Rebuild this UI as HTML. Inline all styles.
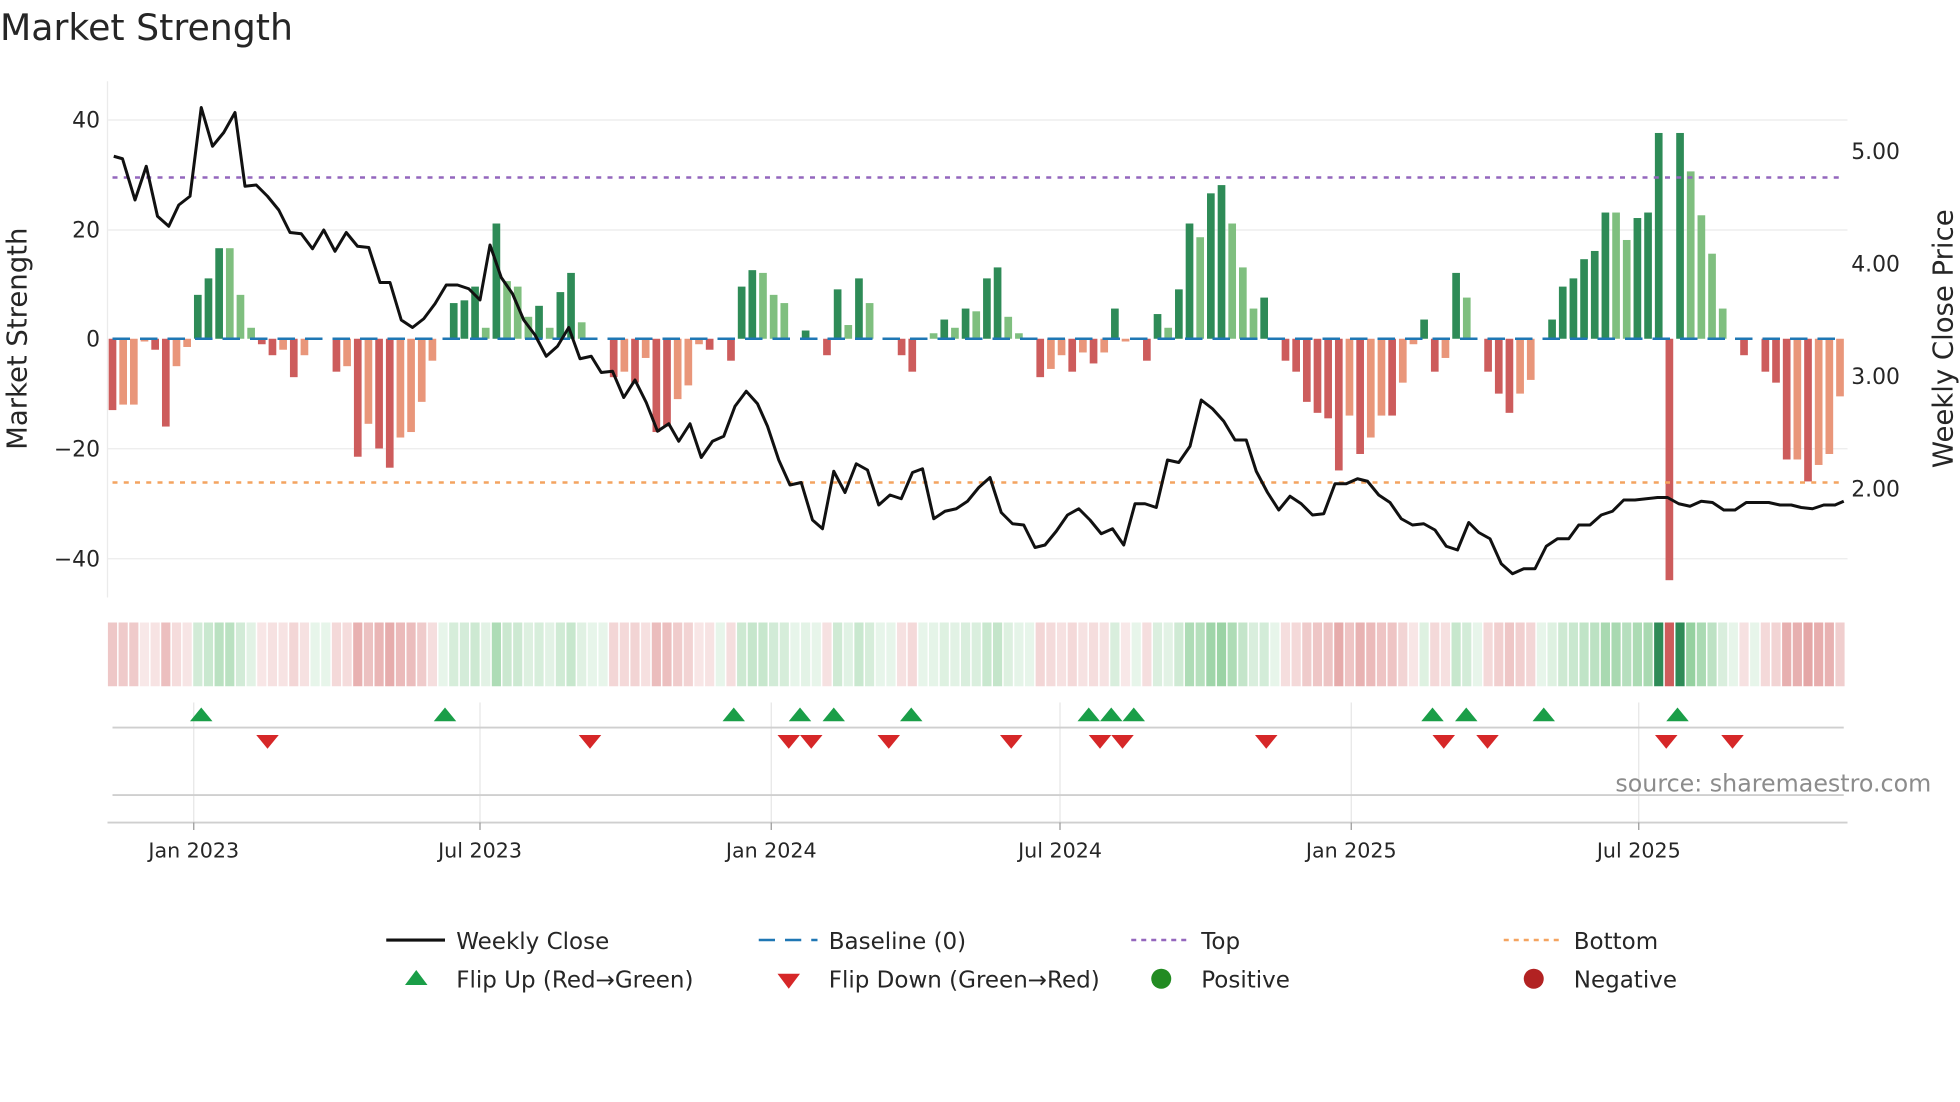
<!DOCTYPE html>
<html><head><meta charset="utf-8">
<style>
html,body{margin:0;padding:0;background:#fff;width:1960px;height:1102px;overflow:hidden}
svg{display:block}
text{font-family:"DejaVu Sans","Liberation Sans",sans-serif;fill:#262626}
</style></head>
<body>
<svg id="s" width="1960" height="1102" viewBox="0 0 1568 881.6" xmlns="http://www.w3.org/2000/svg">
<text x="0" y="32" font-size="29">Market Strength</text>
<g id="grid" stroke="#ebebeb" stroke-width="1">
<line x1="86" y1="96" x2="1478" y2="96"/>
<line x1="86" y1="184" x2="1478" y2="184"/>
<line x1="86" y1="359" x2="1478" y2="359"/>
<line x1="86" y1="447" x2="1478" y2="447"/>
<line x1="86" y1="65" x2="86" y2="478"/>
</g>
<g font-size="17.5" text-anchor="end">
<text x="80" y="102">40</text><text x="80" y="190">20</text><text x="80" y="277">0</text>
<text x="80" y="365">−20</text><text x="80" y="453">−40</text>
</g>
<g font-size="17.5">
<text x="1481" y="127">5.00</text><text x="1481" y="217">4.00</text>
<text x="1481" y="307">3.00</text><text x="1481" y="397">2.00</text>
</g>
<text transform="translate(21,271) rotate(-90)" font-size="22" text-anchor="middle">Market Strength</text>
<text transform="translate(1562,271) rotate(-90)" font-size="22" text-anchor="middle">Weekly Close Price</text>
<g id="bars"></g>
<line x1="90" y1="271" x2="1475" y2="271" stroke="#1f77b4" stroke-width="2" stroke-dasharray="14,8"/>
<line x1="90" y1="142" x2="1475" y2="142" stroke="#9467bd" stroke-width="2" stroke-dasharray="4,5"/>
<line x1="90" y1="386" x2="1475" y2="386" stroke="#f4a460" stroke-width="2" stroke-dasharray="4,5"/>
<polyline id="pl" fill="none" stroke="#111" stroke-width="2.4" stroke-linejoin="round"/>
<g id="heat"></g>
<g stroke="#e6e6e6" stroke-width="1">
<line x1="155" y1="562" x2="155" y2="658"/><line x1="384" y1="562" x2="384" y2="658"/>
<line x1="617" y1="562" x2="617" y2="658"/><line x1="848" y1="562" x2="848" y2="658"/>
<line x1="1081" y1="562" x2="1081" y2="658"/><line x1="1311" y1="562" x2="1311" y2="658"/>
</g>
<line x1="90" y1="582" x2="1475" y2="582" stroke="#cfcfcf" stroke-width="1.5"/>
<line x1="90" y1="636" x2="1475" y2="636" stroke="#cfcfcf" stroke-width="1.5"/>
<line x1="86" y1="658" x2="1478" y2="658" stroke="#cfcfcf" stroke-width="1.5"/>
<g id="mk"></g>
<g stroke="#999" stroke-width="1"><line x1="155" y1="658" x2="155" y2="664"/><line x1="384" y1="658" x2="384" y2="664"/><line x1="617" y1="658" x2="617" y2="664"/><line x1="848" y1="658" x2="848" y2="664"/><line x1="1081" y1="658" x2="1081" y2="664"/><line x1="1311" y1="658" x2="1311" y2="664"/></g>
<g font-size="16.5" text-anchor="middle">
<text x="155" y="686">Jan 2023</text><text x="384" y="686">Jul 2023</text><text x="617" y="686">Jan 2024</text>
<text x="848" y="686">Jul 2024</text><text x="1081" y="686">Jan 2025</text><text x="1311" y="686">Jul 2025</text>
</g>
<text x="1545" y="633" font-size="19" text-anchor="end" style="fill:#8c8c8c">source: sharemaestro.com</text>
<g font-size="18.4">
<line x1="309" y1="752" x2="356" y2="752" stroke="#111" stroke-width="2.5"/>
<text x="365" y="759">Weekly Close</text>
<line x1="607" y1="752" x2="654" y2="752" stroke="#1f77b4" stroke-width="2" stroke-dasharray="13,8"/>
<text x="663" y="759">Baseline (0)</text>
<line x1="905" y1="752" x2="952" y2="752" stroke="#9467bd" stroke-width="2" stroke-dasharray="4,4"/>
<text x="961" y="759">Top</text>
<line x1="1203" y1="752" x2="1250" y2="752" stroke="#f4a460" stroke-width="2" stroke-dasharray="4,4"/>
<text x="1259" y="759">Bottom</text>
<polygon points="324,788 342,788 333,776" fill="#1a9e48"/>
<text x="365" y="790">Flip Up (Red→Green)</text>
<polygon points="622,779 640,779 631,791" fill="#d62728"/>
<text x="663" y="790">Flip Down (Green→Red)</text>
<circle cx="929" cy="783" r="8" fill="#228b22"/>
<text x="961" y="790">Positive</text>
<circle cx="1227" cy="783" r="8" fill="#b22222"/>
<text x="1259" y="790">Negative</text>
</g>
</svg>
<script>
var v=[[-13,1],[-12,0],[-12,0],[-0.5,0],[-2,1],[-16,1],[-5,0],[-1.5,0],[8,1],[11,1],[16.5,1],[16.5,0],[8,0],[2,0],[-1,1],[-3,1],[-2,0],[-7,1],[-3,0],[0,0],[0,0],[-6,1],[-5,0],[-21.5,1],[-15.5,0],[-20,1],[-23.5,1],[-18,0],[-17,0],[-11.5,0],[-4,0],[0,0],
[6.5,1],[7,1],[9.5,1],[2,0],[21,1],[10.5,0],[9.5,0],[4,0],[6,1],[2,0],[8.5,1],[12,1],[3,0],[0,0],[0,0],[-7,1],[-6,0],[-8,1],[-3.5,0],[-17,1],[-16,1],[-11,0],[-8.5,0],[-1,0],[-2,1],[0,0],[-4,1],
[9.5,1],[12.5,1],[12,0],[8,0],[6.5,0],[0,0],[1.5,1],[0,0],[-3,1],[9,1],[2.5,0],[11,1],[6.5,0],[0,0],[0,0],[-3,1],[-6,1],[0,0],[1,0],[3.5,1],[2,0],[5.5,1],[5,0],[11,1],[13,1],[4,0],[1,0],[0,0],[-7,1],[-5.5,0],[-3,0],[-6,1],[-2.5,0],[-4.5,1],[-2.5,0],[5.5,1],[-0.5,0],[0,0],[-4,1],[4.5,1],[2,0],[9,1],[21,1],[18.5,0],[26.5,1],[28,1],[21,0],[13,0],[5.5,0],[7.5,1],[0,0],
[-4,1],[-6,1],[-11.5,1],[-13.5,1],[-14.5,1],[-24,1],[-14,0],[-21,1],[-18,0],[-14,0],[-14,1],[-8,0],[-1,0],[3.5,1],[-6,1],[-3.5,0],[12,1],[7.5,0],[0,0],[-6,1],[-10,1],[-13.5,1],[-10,0],[-7.5,0],[0,0],[3.5,1],[9.5,1],[11,1],[14.5,1],[16,1],[23,1],[23,0],[18,0],[22,1],[23,1],[37.5,1],[-44,1],[37.5,1],[30.5,0],[22.5,0],[15.5,0],[5.5,0],[0,0],[-3,1],[0,0],[-6,1],[-8,1],[-22,1],[-22,0],[-26,1],[-23,0],[-21,0],[-10.5,0]];
var n=v.length,x0=90,x1=1472,st=(x1-x0)/(n-1),bw=st*0.72,ns="http://www.w3.org/2000/svg";
function el(t,a,p){var e=document.createElementNS(ns,t);for(var k in a)e.setAttribute(k,a[k]);p.appendChild(e);}
var B=document.getElementById('bars'),H=document.getElementById('heat'),sc=4.39;
for(var i=0;i<n;i++){var x=x0+i*st,val=v[i][0],d=v[i][1];
 var c=val>=0?(d?'#2e8b57':'#7fbf7f'):(d?'#cd5c5c':'#e9967a');
 if(val!=0){var h=Math.abs(val)*sc;el('rect',{x:x-bw/2,y:val>0?271-h:271,width:bw,height:h,fill:c},B);}
 var a=Math.min(1,0.2+Math.abs(val)/30*0.7);
 var hc=val>=0?'rgba(60,170,80,'+(a*0.6)+')':'rgba(200,70,70,'+(a*0.6)+')';
 if(Math.abs(val)>35)hc=val>0?'#2e8b57':'#cd5c5c';
 el('rect',{x:x-st/2+0.6,y:498,width:st-1.2,height:51,fill:hc},H);}
var p=[91,125,98,127,108,160,117,133,126,173,135,181,143,164,152,157,161,86,170,117,179,106,188,90,196,149,205,148,214,157,223,168,232,186,241,187,250,199,259,184,268,201,277,186,286,197,295,198,304,226,312,226,321,256,330,262,339,255,348,243,357,228,366,228,375,231,384,240,392,196,401,222,410,235,419,256,428,268,437,285,446,277,455,262,464,287,473,285,481,298,490,297,499,318,508,304,517,322,526,345,535,339,543,353,552,339,561,366,570,353,579,349,588,325,597,313,606,323,614,341,623,368,632,388,641,386,650,416,658,423,667,377,676,394,685,371,694,376,703,404,712,396,721,399,730,378,738,375,747,415,756,409,765,407,774,401,783,390,792,382,801,410,810,419,819,420,828,438,836,436,845,425,854,412,863,407,872,416,881,427,890,423,899,436,908,403,916,403,925,406,934,368,943,370,952,357,961,320,970,327,979,337,988,352,997,352,1005,377,1014,394,1023,408,1032,397,1041,403,1050,412,1059,411,1068,387,1077,387,1086,383,1094,385,1103,396,1112,402,1121,415,1130,420,1139,419,1148,424,1157,437,1166,440,1175,418,1183,426,1192,431,1201,451,1210,459,1219,455,1228,455,1237,437,1246,431,1255,431,1263,420,1272,420,1281,412,1290,409,1299,400,1308,400,1317,399,1326,398,1334,398,1343,403,1352,405,1361,401,1370,402,1379,408,1388,408,1397,402,1406,402,1415,402,1424,404,1433,404,1441,406,1450,407,1459,404,1468,404,1475,401];
var s='';for(var j=0;j<p.length;j+=2)s+=p[j]+','+p[j+1]+' ';document.getElementById('pl').setAttribute('points',s);
var M=document.getElementById('mk');
[161,356,587,640,667,729,871,889,907,1146,1173,1235,1342].forEach(function(x){el('polygon',{points:(x-9)+',577 '+(x+9)+',577 '+x+',566',fill:'#1a9e48'},M);});
[214,472,631,649,711,809,880,898,1013,1155,1190,1333,1386].forEach(function(x){el('polygon',{points:(x-9)+',588 '+(x+9)+',588 '+x+',599',fill:'#d62728'},M);});
</script>
</body></html>
